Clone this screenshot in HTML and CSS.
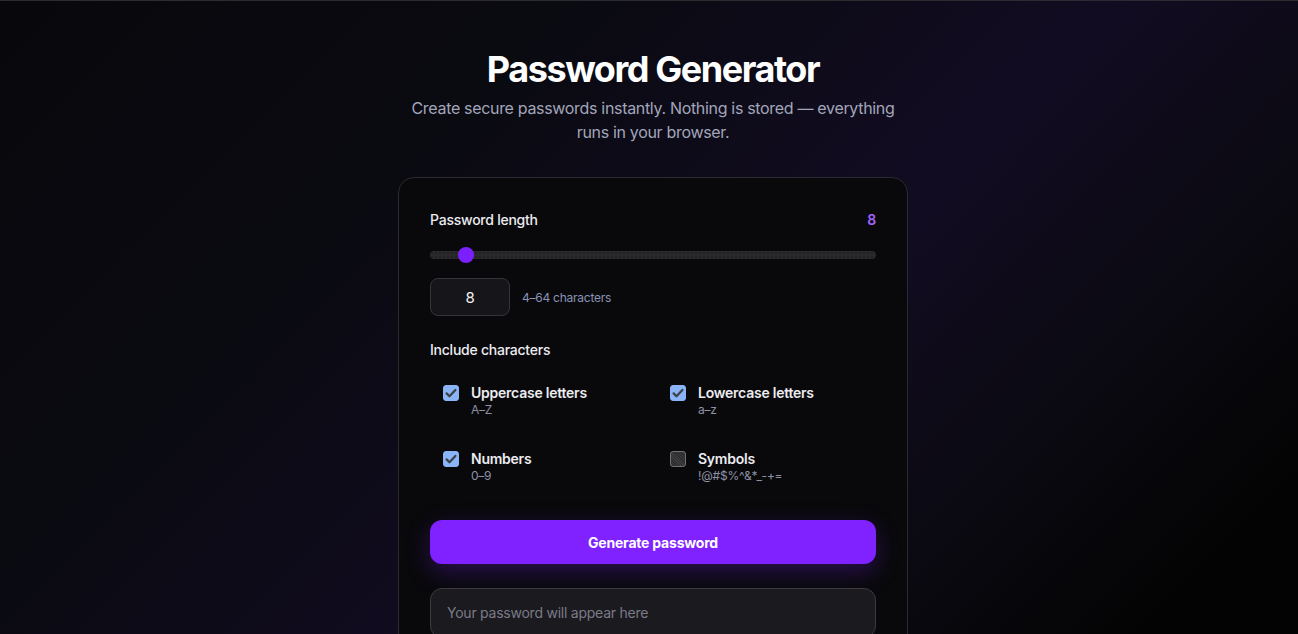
FILE: index.html
```html
<!DOCTYPE html>
<html lang="en">
<head>
<meta charset="utf-8">
<title>Password Generator</title>
<link rel="stylesheet" href="styles.css">
</head>
<body>
<main class="page">
  <header class="hero">
    <h1 class="title">Password Generator</h1>
    <p class="subtitle">Create secure passwords instantly. Nothing is stored — everything runs in your browser.</p>
  </header>
  <section class="card">
    <div class="len-row">
      <span class="label">Password length</span>
      <span class="len-value">8</span>
    </div>
    <div class="slider">
      <div class="track"></div>
      <div class="thumb"></div>
    </div>
    <div class="num-row">
      <div class="num-box">8</div>
      <span class="hint">4–64 characters</span>
    </div>
    <div class="section-label">Include characters</div>
    <div class="options">
      <div class="opt">
        <span class="box checked"><svg viewBox="0 0 16 16" width="16" height="16"><path d="M3.6 8.4l2.9 2.9 5.9-6.4" fill="none" stroke="#3c4043" stroke-width="2.2" stroke-linecap="round" stroke-linejoin="round"/></svg></span>
        <div class="opt-text"><div class="opt-title">Uppercase letters</div><div class="opt-sub">A–Z</div></div>
      </div>
      <div class="opt">
        <span class="box checked"><svg viewBox="0 0 16 16" width="16" height="16"><path d="M3.6 8.4l2.9 2.9 5.9-6.4" fill="none" stroke="#3c4043" stroke-width="2.2" stroke-linecap="round" stroke-linejoin="round"/></svg></span>
        <div class="opt-text"><div class="opt-title">Lowercase letters</div><div class="opt-sub">a–z</div></div>
      </div>
      <div class="opt">
        <span class="box checked"><svg viewBox="0 0 16 16" width="16" height="16"><path d="M3.6 8.4l2.9 2.9 5.9-6.4" fill="none" stroke="#3c4043" stroke-width="2.2" stroke-linecap="round" stroke-linejoin="round"/></svg></span>
        <div class="opt-text"><div class="opt-title">Numbers</div><div class="opt-sub">0–9</div></div>
      </div>
      <div class="opt">
        <span class="box"></span>
        <div class="opt-text"><div class="opt-title">Symbols</div><div class="opt-sub">!@#$%^&amp;*_-+=</div></div>
      </div>
    </div>
    <button class="gen-btn">Generate password</button>
    <div class="output">Your password will appear here</div>
  </section>
</main>
</body>
</html>
```

FILE: styles.css
```css
* { box-sizing: border-box; }
html, body { margin: 0; height: 100%; }
body {
  font-family: Inter, "Noto Sans", sans-serif;
  letter-spacing: -0.015em;
  color: #e7e7ec;
  background: linear-gradient(135deg, #08080c 0%, #0a0a11 30%, #120c22 58%, #0a0910 78%, #030303 92%);
  border-top: 1px solid #2c2c30;
  overflow: hidden;
}
.page {
  display: flex;
  flex-direction: column;
  align-items: center;
  padding: 44px 0 0 8px;
}
.hero { text-align: center; }
.title {
  margin: 0;
  font-size: 36px;
  font-weight: 700;
  letter-spacing: -0.04em;
  line-height: 48px;
  color: #ffffff;
}
.subtitle {
  margin: 3px auto 0;
  max-width: 500px;
  font-size: 16px;
  line-height: 24px;
  letter-spacing: -0.02em;
  color: #a2a6ba;
}
.card {
  margin-top: 33px;
  width: 510px;
  background: #09090b;
  border: 1px solid #2a2a30;
  border-radius: 16px;
  padding: 32px 31px 40px;
}
.len-row {
  display: flex;
  justify-content: space-between;
  align-items: center;
  font-size: 14px;
  font-weight: 500;
  line-height: 20px;
}
.label { color: #ececf1; }
.len-value { color: #a463ff; font-weight: 600; }
.slider {
  position: relative;
  margin-top: 17px;
  height: 16px;
  display: flex;
  align-items: center;
}
.track {
  flex: 1;
  height: 8px;
  border-radius: 4px;
  background: #2a2a2d;
  background-image: radial-gradient(#1c1c1f 0.6px, transparent 0.9px);
  background-size: 4px 4px;
}
.thumb {
  position: absolute;
  left: 28px;
  top: 0;
  width: 16px;
  height: 16px;
  border-radius: 50%;
  background: #7b1ffc;
}
.num-row {
  display: flex;
  align-items: center;
  gap: 12px;
  margin-top: 15px;
}
.num-box {
  width: 80px;
  height: 38px;
  border: 1px solid #34343a;
  border-radius: 8px;
  background: #16161a;
  display: flex;
  align-items: center;
  justify-content: center;
  font-size: 15px;
  color: #f2f2f5;
}
.hint { font-size: 12px; color: #8a93b5; }
.section-label {
  margin-top: 24px;
  font-size: 14px;
  font-weight: 500;
  line-height: 20px;
  color: #ececf1;
}
.options {
  display: grid;
  grid-template-columns: 1fr 1fr;
  column-gap: 8px;
  row-gap: 4px;
  margin-top: 12px;
}
.opt {
  display: flex;
  align-items: flex-start;
  gap: 12px;
  padding: 12px 13px;
  height: 62px;
}
.box {
  flex: none;
  width: 16px;
  height: 16px;
  margin-top: 1px;
  border-radius: 3px;
  background: #353538;
  background-image: repeating-linear-gradient(45deg, #2c2c2f 0 1px, #3d3d40 1px 2px);
  border: 1px solid #6f6f74;
  display: flex;
}
.box.checked { background: #8ab4f8; border-color: #8ab4f8; }
.box svg { display: block; margin: -1px; }
.opt-title { font-size: 14px; font-weight: 600; line-height: 18px; color: #ececf1; }
.opt-sub { font-size: 12px; line-height: 16px; color: #8d91a6; }
.gen-btn {
  display: block;
  width: 100%;
  margin-top: 20px;
  height: 44px;
  border: 0;
  border-radius: 12px;
  background: #7f22ff;
  color: #ffffff;
  font-family: inherit;
  letter-spacing: -0.015em;
  font-size: 14px;
  font-weight: 700;
  box-shadow: 0 8px 24px rgba(124, 34, 255, 0.28);
}
.output {
  margin-top: 24px;
  height: 50px;
  border: 1px solid #3a3a40;
  border-radius: 12px;
  background: #1a1a1f;
  padding: 0 16px 2px;
  display: flex;
  align-items: center;
  font-size: 14px;
  color: #7b7b87;
}
```
